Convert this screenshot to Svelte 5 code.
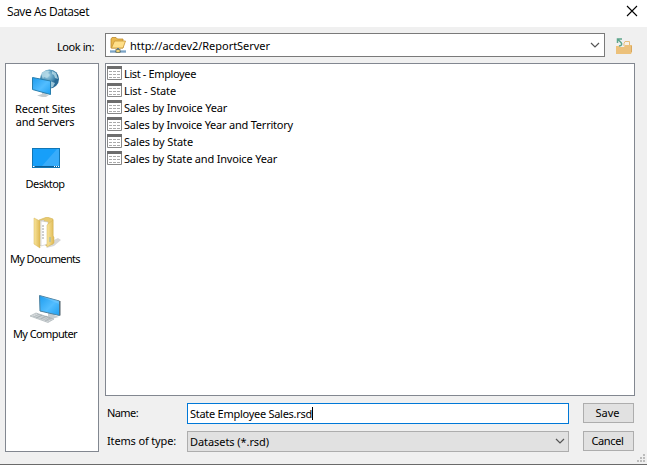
<script>
  const items = [
    ['List - Employee', 72],
    ['List - State', 52],
    ['Sales by Invoice Year', 103],
    ['Sales by Invoice Year and Territory', 169],
    ['Sales by State', 69],
    ['Sales by State and Invoice Year', 153]
  ];

  // Spreads the letters of a label so that it takes the given width.
  function fit(node, width) {
    const natural = node.getBoundingClientRect().width;
    const lines = node.querySelectorAll('br').length + 1;
    node.style.letterSpacing = ((width - natural) * lines) / node.textContent.length + 'px';
  }
</script>

{#snippet chevron()}
  <svg class="chevron" width="10" height="7" viewBox="0 0 10 7"><path d="M1 1l4 4 4-4" fill="none" stroke="#555" stroke-width="1.2" /></svg>
{/snippet}

<div class="dialog">
  <header>
    <span class="title" use:fit={82}>Save As Dataset</span>
    <svg width="12" height="12" viewBox="0 0 12 12"><path d="M1 1l10 10M11 1L1 11" stroke="#000" stroke-width="1.1" /></svg>
  </header>

  <div class="lookin">
    <div class="looklabel"><span use:fit={37}>Look in:</span></div>
    <div class="combo">
      <svg width="16" height="17" viewBox="0 0 16 17">
        <path d="M1 2l1-1.500h4l1.500 1.500H13v9H1z" fill="#e9b84e" stroke="#bd8a2c" stroke-width=".8" />
        <path d="M1.500 11L4.500 4H15.500L13 11z" fill="#ffdf88" stroke="#c79436" stroke-width=".8" />
        <path d="M0 14.500h16" stroke="#4f7eaa" stroke-width="2" />
        <path d="M0 14h5M11 14h5" stroke="#a8c9e1" />
        <path d="M8 11v2" stroke="#587b94" stroke-width="2" />
        <rect x="6" y="12.500" width="4" height="3" fill="#f0d376" stroke="#6c7460" stroke-width=".8" />
      </svg>
      <span use:fit={140}>http://acdev2/ReportServer</span>
      {@render chevron()}
    </div>
    <svg class="up" width="17" height="17" viewBox="0 0 17 17">
      <path d="M8 8V5.500L9 3.500h4.500v4" fill="#f8f1e6" stroke="#e7bd78" />
      <path d="M0 8h3l1 1h4l1-2h7v7l-1 2H0z" fill="#ecc17b" />
      <path d="M15.500 8v6" stroke="#d9a85f" />
      <path d="M1.500 5V1H6M2 1.500l3 3c1.500 2 .5 3-2 3.500" fill="none" stroke="#5da58c" stroke-width="1.500" />
    </svg>
  </div>

  <div class="main">
    <nav>
      <div class="place recent">
        <svg width="28" height="29" viewBox="0 0 28 29">
          <defs>
            <radialGradient id="globe" cx=".4" cy=".3"><stop stop-color="#a9d5e8" /><stop offset=".65" stop-color="#5295b8" /><stop offset="1" stop-color="#286a95" /></radialGradient>
            <linearGradient id="screen" x2="1" y2="1"><stop stop-color="#1e9cee" /><stop offset=".55" stop-color="#52bdff" /><stop offset="1" stop-color="#1d9ff1" /></linearGradient>
          </defs>
          <circle cx="17.500" cy="10" r="9.500" fill="url(#globe)" />
          <path d="M9 5c3-4 7-4 9-3l-2 2 2 2-3 3-3-1-1 2zM20 2l4 2 2 6-3-1-1-3-2-1zM18 12l5 2-2 4-3 1z" fill="#b8dce8" opacity=".8" />
          <path d="M10 22v3l-5 1.500 5 1.500h4l3-2-3-1v-3z" fill="#c3ccd1" />
          <path d="M.5 8.500l18 3.500v13.500L.5 20.500z" fill="url(#screen)" stroke="#287ead" />
        </svg>
        <span class="two" use:fit={60}>Recent Sites<br />and Servers</span>
      </div>
      <div class="place desktop">
        <svg width="28" height="20" viewBox="0 0 28 20">
          <rect x=".5" y=".5" width="27" height="19" fill="#179ff9" stroke="#1176b5" />
          <path d="M27 1v17H10L25 1z" fill="#4ab4fa" opacity=".65" />
          <path d="M1 18.500h26" stroke="#0c5d94" />
          <path d="M1 18.500h1.500M22 18.500h1M24 18.500h1M26 18.500h1" stroke="#fff" />
        </svg>
        <span use:fit={39}>Desktop</span>
      </div>
      <div class="place docs">
        <svg width="28" height="32" viewBox="0 0 28 32">
          <defs><linearGradient id="folder"><stop stop-color="#f9e59d" /><stop offset="1" stop-color="#dfb954" /></linearGradient></defs>
          <path d="M19 24l6-3 3 2-7 6-8 2z" fill="#d7d7d7" />
          <path d="M6 3l8-3 6 2v25l-7 2z" fill="#e8ca70" stroke="#d3b354" stroke-width=".6" />
          <path d="M5 4l6-1v24l-5 2z" fill="#f3f3f3" stroke="#aaa" stroke-width=".4" />
          <path d="M8 4l7 1v22l-7 2z" fill="#fff" stroke="#bbb" stroke-width=".5" />
          <path d="M9 9h2M9 12h2M9 15h2M9 18h2M9 21h2" stroke="#777" stroke-width=".7" />
          <path d="M14 8l6-5v16l1 1v6l-7 4z" fill="url(#folder)" stroke="#d6b455" stroke-width=".5" />
          <path d="M1 1l6 3v27l-6-4z" fill="url(#folder)" stroke="#d6b455" stroke-width=".5" />
          <path d="M17 20v5" stroke="#8fb4bd" stroke-width="1" />
        </svg>
        <span use:fit={70}>My Documents</span>
      </div>
      <div class="place computer">
        <svg width="31" height="28" viewBox="0 0 31 28">
          <path d="M18 17v4l-4 1 7 2 8-2-5-2v-3z" fill="#c6cdd0" />
          <path d="M9.500.5l20 5.500v14.500L10 16z" fill="url(#screen)" stroke="#4e819e" />
          <path d="M10 1l19 5v3z" fill="#84d0ff" opacity=".4" />
          <path d="M30 6v14.500" stroke="#53636c" />
          <path d="M0 21l6-3 18 6-6 3.500z" fill="#d8dcde" stroke="#9faaad" stroke-width=".6" />
          <path d="M3 21l16 5M5 20l16 5M7 19l15 5M6 23l6-3M11 24l6-3M15 26l5-3" stroke="#8f9b9f" stroke-width=".45" />
        </svg>
        <span use:fit={64}>My Computer</span>
      </div>
    </nav>

    <section>
      <div class="files">
        {#each items as [label, width]}
          <div class="file">
            <svg width="15" height="14" viewBox="0 0 15 14">
              <path d="M.5 1.500v12h14v-12" fill="#fff" stroke="#888" />
              <path d="M0 0h15v3H0z" fill="#6d6d6d" />
              <path d="M2 5.500h11M2 8.500h11M2 11.500h11" stroke="#aaa" stroke-dasharray="3 1" />
            </svg>
            <span use:fit={width}>{label}</span>
          </div>
        {/each}
      </div>
      <div class="field">
        <div class="label"><span use:fit={31}>Name:</span></div>
        <div class="input"><span use:fit={122}>State Employee Sales.rsd</span><i></i></div>
        <div class="button"><span use:fit={24}>Save</span></div>
      </div>
      <div class="field">
        <div class="label"><span use:fit={69}>Items of type:</span></div>
        <div class="input select"><span use:fit={79}>Datasets (*.rsd)</span>{@render chevron()}</div>
        <div class="button"><span use:fit={32}>Cancel</span></div>
      </div>
    </section>
  </div>
  <svg class="grip" width="8" height="8" viewBox="0 0 8 8" fill="#bcbcbc"><path d="M6 0h2v2H6zM3 3h2v2H3zM6 3h2v2H6zM0 6h2v2H0zM3 6h2v2H3zM6 6h2v2H6z" /></svg>
</div>

<style>
  .dialog { box-sizing: border-box; position: relative; width: 647px; height: 465px; overflow: hidden; background: #f0f0f0; border-bottom: 1px solid #6a6a6a; color: #000; font: 11px/13px Tahoma, "Noto Sans", sans-serif; white-space: nowrap; }
  .dialog * { box-sizing: border-box; }
  svg { display: block; flex: none; }
  header { display: flex; justify-content: space-between; height: 27px; padding: 5px 9px 0 7px; background: #fff; }
  .title { font: 12px/14px "Segoe UI", "Open Sans", sans-serif; }
  .lookin { display: flex; height: 36px; padding-top: 6px; }
  .looklabel { width: 105px; padding: 7px 0 0 57px; }
  .combo { display: flex; align-items: center; width: 500px; height: 24px; padding: 0 4px; border: 1px solid #7a7a7a; background: #fff; }
  .combo span { margin-left: 4px; }
  .chevron { margin-left: auto; }
  .up { margin: 5px 0 0 11px; }
  .main { display: flex; gap: 6px; padding-left: 5px; }
  nav { width: 94px; height: 389px; border: 1px solid #828790; background: #fff; }
  .place { display: flex; flex-direction: column; align-items: center; padding-right: 14px; }
  .two { text-align: center; }
  .recent { height: 84px; padding-top: 5px; }
  .recent svg { margin: 0 0 4px 2px; }
  .desktop { height: 69px; }
  .desktop svg { margin: 0 0 9px 2px; }
  .docs { height: 78px; }
  .docs svg { margin: 0 0 3px 3px; }
  .computer svg { margin: 0 0 4px 1px; }
  section { width: 530px; }
  .files { height: 333px; padding: 2px 1px; border: 1px solid #828790; background: #fff; }
  .file { display: flex; gap: 2px; height: 17px; }
  .file span { margin-top: 1px; }
  .field { display: flex; height: 21px; margin-top: 7px; }
  .label { width: 82px; padding: 3px 0 0 2px; }
  .input { display: flex; align-items: center; width: 382px; height: 21px; padding: 0 2px; border: 1px solid #0078d7; background: #fff; }
  .input i { width: 1px; height: 13px; background: #000; }
  .select { padding-right: 3px; border-color: #adadad; background: #e1e1e1; }
  .button { display: flex; align-items: center; justify-content: center; width: 51px; height: 20px; margin-left: 14px; border: 1px solid #adadad; background: #e1e1e1; }
  .button span { margin: 0 2px 1px 0; }
  .grip { position: absolute; right: 2px; bottom: 2px; }
</style>
